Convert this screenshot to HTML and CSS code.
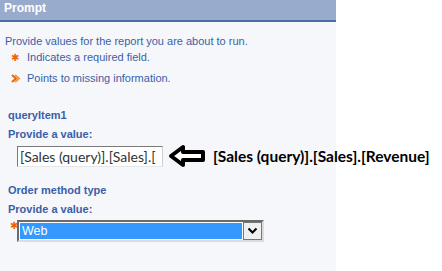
FILE: index.html
```html
<!DOCTYPE html>
<html lang="en">
<head>
  <meta charset="UTF-8">
  <title>Prompt</title>
  <link rel="stylesheet" href="styles.css">
</head>
<body>
  <div class="panel">
    <div class="panel-header">Prompt</div>
    <div class="panel-body">
      <p class="intro">Provide values for the report you are about to run.</p>
      <div class="legend-row">
        <span class="legend-icon star">&#10033;</span>
        <span>Indicates a required field.</span>
      </div>
      <div class="legend-row">
        <span class="legend-icon">
          <svg width="10" height="9" viewBox="0 0 10 9">
            <path d="M1 1 L5 4.5 L1 8" fill="none" stroke="#e8650a" stroke-width="2"/>
            <path d="M4 1 L8 4.5 L4 8" fill="none" stroke="#f29a4a" stroke-width="2"/>
          </svg>
        </span>
        <span>Points to missing information.</span>
      </div>

      <div class="prompt first-prompt">
        <div class="prompt-title">queryItem1</div>
        <div class="prompt-label">Provide a value:</div>
        <div class="prompt-row">
          <div class="text-box">[Sales (query)].[Sales].[</div>
          <svg class="callout-arrow" width="38" height="24" viewBox="0 0 38 24">
            <path d="M3 12 L15 3 L15 8 L35 8 L35 16 L15 16 L15 21 Z" fill="#fff" stroke="#000" stroke-width="4" stroke-linejoin="round"/>
          </svg>
          <span class="callout-text">[Sales (query)].[Sales].[Revenue]</span>
        </div>
      </div>

      <div class="prompt">
        <div class="prompt-title">Order method type</div>
        <div class="prompt-label">Provide a value:</div>
        <div class="prompt-row select-row">
          <span class="req">&#10033;</span>
          <div class="select-box">
            <div class="select-value">Web</div>
            <div class="select-button">
              <svg width="11" height="8" viewBox="0 0 11 8">
                <path d="M1.5 1.5 L5.5 5.5 L9.5 1.5" fill="none" stroke="#000" stroke-width="2"/>
              </svg>
            </div>
          </div>
        </div>
      </div>
    </div>
  </div>
</body>
</html>
```

FILE: styles.css
```css
html, body {
  margin: 0;
  padding: 0;
  background: white;
  width: 100%;
  height: 100%;
  overflow: hidden;
}

.panel {
  width: 336px;
  height: 100%;
  background: #f5f7fa;
  font-family: "Liberation Sans", Arial, sans-serif;
  font-size: 11px;
  color: #3a5fa8;
}

.panel-header {
  height: 20px;
  background: #99abcc;
  border-bottom: 2px solid #4b6ea8;
  color: white;
  font-weight: bold;
  font-size: 12px;
  line-height: 17px;
  padding-left: 4px;
}

.panel-body {
  padding: 13px 0 0 5px;
}

.intro {
  margin: 0;
  line-height: 13px;
}

.legend-row {
  display: flex;
  align-items: center;
  height: 18px;
  margin-bottom: 3px;
}

.legend-icon {
  width: 22px;
  padding-left: 6px;
  box-sizing: border-box;
  display: flex;
  align-items: center;
}

.star {
  color: #f0620a;
  font-size: 10px;
}

.prompt {
  padding-left: 3px;
}

.first-prompt {
  margin-top: 21px;
}

.prompt-title {
  font-weight: bold;
  line-height: 14px;
  margin-bottom: 5px;
}

.prompt-label {
  font-weight: bold;
  line-height: 14px;
  margin-bottom: 3px;
}

.prompt-row {
  display: flex;
  align-items: center;
  padding-left: 9px;
  height: 24px;
  margin-bottom: 15px;
}

.prompt-row > * {
  flex: none;
}

.text-box {
  width: 142px;
  height: 19px;
  border: 1px solid #7a7a7a;
  border-right-color: #cfcfcf;
  border-bottom-color: #e6e6e6;
  background: white;
  color: #333;
  font-family: Lato, sans-serif;
  font-size: 14px;
  line-height: 19px;
  padding-left: 2px;
  white-space: nowrap;
  overflow: hidden;
}

.callout-arrow {
  margin-left: 5px;
}

.callout-text {
  margin-left: 7px;
  color: black;
  font-weight: bold;
  font-size: 15.5px;
  font-family: Lato, sans-serif;
  white-space: nowrap;
}

.select-row {
  padding-left: 2px;
  padding-top: 1px;
  align-items: flex-start;
}

.req {
  color: #f0620a;
  font-size: 10px;
  width: 7px;
  line-height: 12px;
}

.select-box {
  display: flex;
  width: 243px;
  height: 18px;
  border: 2px solid #6a6a6a;
  border-right-color: #dcdcdc;
  border-bottom-color: #dcdcdc;
  background: white;
}

.select-value {
  flex: 1;
  margin: 1px;
  background: #3399ff;
  color: white;
  font-size: 12.5px;
  line-height: 16px;
  padding-left: 2px;
}

.select-button {
  width: 17px;
  border: 1px solid #777;
  background: #f0f0f0;
  display: flex;
  align-items: center;
  justify-content: center;
}
```
